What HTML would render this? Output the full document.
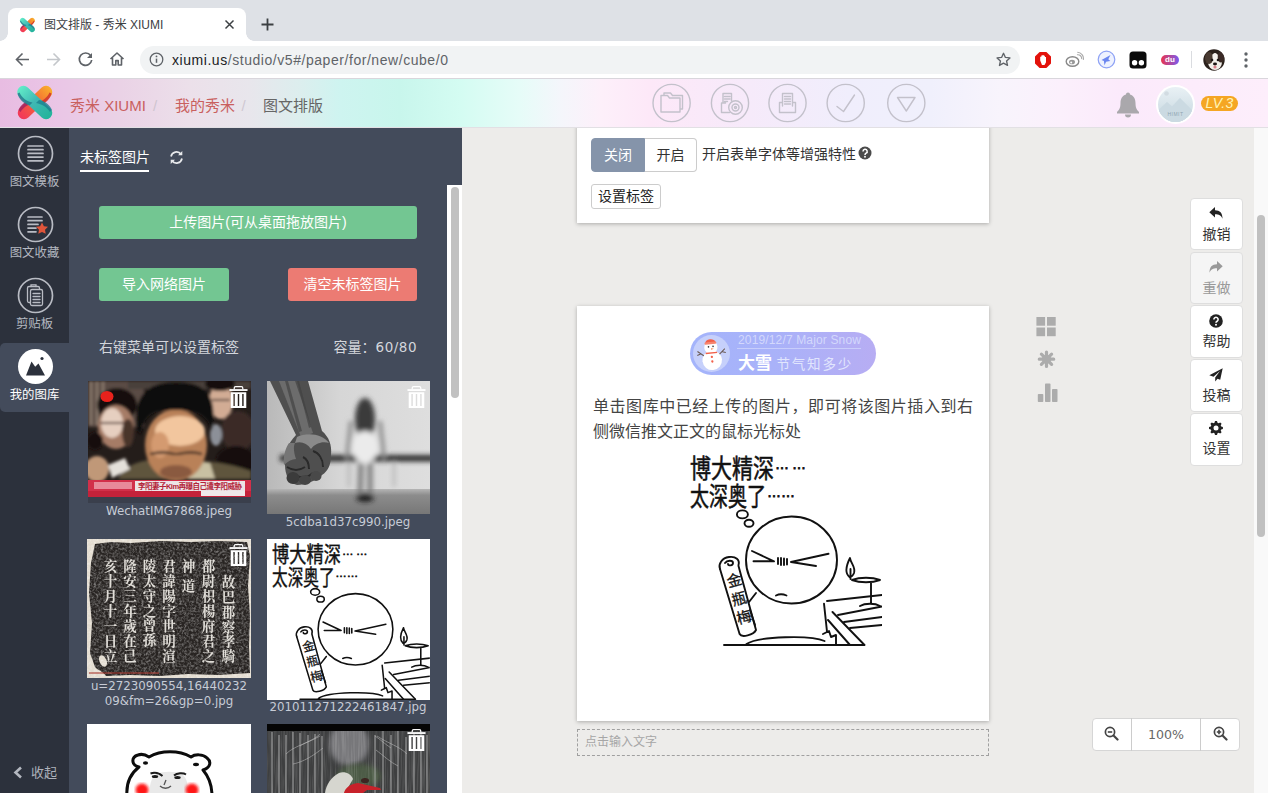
<!DOCTYPE html>
<html lang="zh-CN">
<head>
<meta charset="utf-8">
<title>图文排版 - 秀米 XIUMI</title>
<style>
*{box-sizing:border-box;margin:0;padding:0}
html,body{width:1268px;height:793px;overflow:hidden;background:#edecea}
body{position:relative;font-family:"Liberation Sans","Noto Sans CJK SC",sans-serif;color:#333;font-size:14px}
.abs{position:absolute}
svg{display:block}
/* ---------- browser chrome ---------- */
#tabstrip{left:0;top:0;width:1268px;height:41px;background:#dee1e6}
#tab{left:8px;top:8px;width:238px;height:33px;background:#fff;border-radius:8px 8px 0 0}
#tab .curveL,#tab .curveR{position:absolute;bottom:0;width:8px;height:8px;background:radial-gradient(circle at 0 0,rgba(255,255,255,0) 7.5px,#fff 8px)}
#tab .curveL{left:-8px}
#tab .curveR{right:-8px;background:radial-gradient(circle at 100% 0,rgba(255,255,255,0) 7.5px,#fff 8px)}
#tabtitle{left:44px;top:17px;font-size:12px;line-height:17px;color:#3c4043;white-space:nowrap}
#toolbar{left:0;top:41px;width:1268px;height:38px;background:#fff;border-bottom:1px solid #d9d6dc}
#omni{left:140px;top:46px;width:880px;height:28px;border-radius:14px;background:#f1f3f4}
#url{left:172px;top:51px;font-size:14px;line-height:18px;color:#5f6368;white-space:nowrap;letter-spacing:.55px}
#url b{font-weight:normal;color:#202124}
/* ---------- app header ---------- */
#apphead{left:0;top:79px;width:1268px;height:49px;background:linear-gradient(90deg,#e8bce2 0px,#eac6e6 60px,#ead2e6 120px,#ece0ea 190px,#e8e6ec 250px,#dceeee 300px,#cef4f0 340px,#c8f6ec 400px,#d4fcf2 460px,#e6fcf8 520px,#f4f6fb 560px,#fdf0fa 600px,#fde8f8 650px,#f6eafa 750px,#f0eefc 850px,#f0f0fc 930px,#f8f4fc 1000px,#fbf0fc 1060px,#fbeafb 1120px,#fdeefb 1268px);border-bottom:1px solid #e2e0e4}
.crumb{top:95.700px;font-size:15px;line-height:20px;white-space:nowrap}
/* ---------- left nav ---------- */
#nav{left:0;top:128px;width:69.500px;height:665px;background:#2c313c}
#navact{left:0;top:342.500px;width:69.500px;height:69px;background:#434b5b;border-radius:5px 0 0 5px}
.navlbl{left:0;width:69px;text-align:center;font-size:12.400px;line-height:16px;color:#b4b8c0}
/* ---------- left panel ---------- */
#panel{left:69px;top:128px;width:393px;height:665px;background:#434b5b}
.btn{color:#fff;text-align:center;border-radius:3px;font-size:14px}
.fname{color:#c7ccd6;font-family:"DejaVu Sans","Noto Sans CJK SC",sans-serif;font-size:11.800px;line-height:15px;text-align:center;white-space:nowrap}
/* ---------- main ---------- */
#main{left:462px;top:128px;width:806px;height:665px;background:#edecea}
.card{background:#fff;box-shadow:0 1px 4px rgba(0,0,0,.28)}
.tlbl{left:1190px;width:53px;text-align:center;font-size:14px;line-height:18px;color:#333}
.tbtn{left:1190px;width:53px;height:52.800px;background:#fff;border:1px solid #dedede;border-radius:4px;text-align:center;font-size:14px;color:#333}
</style>
</head>
<body>

<svg width="0" height="0" style="position:absolute">
<defs>
<linearGradient id="lgA" gradientUnits="userSpaceOnUse" x1="4" y1="4" x2="34" y2="32"><stop offset="0" stop-color="#62ecc8"/><stop offset=".5" stop-color="#3fb8b4"/><stop offset="1" stop-color="#25b49c"/></linearGradient>
<linearGradient id="lgB" gradientUnits="userSpaceOnUse" x1="35" y1="4" x2="5" y2="32"><stop offset="0" stop-color="#f9ae2c"/><stop offset=".45" stop-color="#f46a34"/><stop offset="1" stop-color="#f2385a"/></linearGradient>
<symbol id="xlogo" viewBox="0 0 40 37">
<path d="M31 8L9 29" stroke="url(#lgB)" stroke-width="12.500" stroke-linecap="round" fill="none"/>
<path d="M36.500 9.500c-1 5-6 10-12 12l-3-3c6-1 11-5 13-10z" fill="#d2362e" opacity=".9"/>
<path d="M3.500 26c2-5 7-9 13-10l3 3c-6 1-11 4-14 9z" fill="#a8265e" opacity=".9"/>
<path d="M8.500 8L31 29" stroke="url(#lgA)" stroke-width="12.500" stroke-linecap="round" fill="none"/>
<path d="M2.500 9.500c1 5 6 10 12 12l3-3c-6-1-11-5-13-10z" fill="#247c8c" opacity=".85"/>
<path d="M37 26c-2-5-7-9-13-10l-3 3c6 1 11 4 14 9z" fill="#1c7f90" opacity=".8"/>
</symbol>

<symbol id="cartoon" viewBox="0 0 198 196">
<g fill="none" stroke="#111" stroke-width="1.900" stroke-linecap="round" stroke-linejoin="round">
<ellipse cx="58.400" cy="64.400" rx="5.500" ry="4"/><ellipse cx="65" cy="73.200" rx="4.500" ry="3.500"/>
<ellipse cx="107.500" cy="110" rx="45.500" ry="43.500" fill="#fff"/>
<path d="M68 101l22 10.300-20.500 0M144.500 103.800L107 112l25 4M94 108v6M97 108v7M100 108.500v6.500M103 109v5.500"/>
<path d="M92 145.500c3-1.500 7-1.500 10.500 0"/>
<path d="M36 119c-2-5 2-11 9-12s11 3 9.500 8M41 113c2-3 8-3 8 0s-5 3-5 1"/>
<path d="M36 119l19.600 65c2 4 14 1 16.400-4L54.500 116"/>
<path d="M72 143l-7 9M66 160l5 15"/>
<path d="M165.500 127c-5-4-3-12 .5-19 .5 5 6 9 4 15-1 2.500-3 4-4.500 4zM166.500 119v10"/>
<path d="M168 130c8-3 20-3 28 0-8 3-20 3-28 0zM187 133v20M176 156c5-3 15-3 20 0"/>
<path d="M143 151l55-6M154 165l44-8.500M160 172l38-5M166 178l32-3"/>
<path d="M140 153.700l3 28M148.500 162l32 33M144 170l22 25"/>
<path d="M40 195h140M62.500 194c12-8 65-9 78-3"/>
<path d="M139 184l6-3 2 6 5-2v10"/>
</g>
<g font-family="Liberation Sans,Noto Sans CJK SC,sans-serif" fill="#111" stroke="#111" stroke-width=".45">
<text x="6" y="21" font-size="21" textLength="84" lengthAdjust="spacingAndGlyphs" transform="translate(0 2) scale(1 1.220)">博大精深</text>
<text x="91" y="19" font-size="14" textLength="31" stroke-width=".8">……</text>
<text x="6" y="45" font-size="21" textLength="76" lengthAdjust="spacingAndGlyphs" transform="translate(0 1.500) scale(1 1.220)">太深奥了</text>
<text x="83" y="46.500" font-size="14" textLength="28" stroke-width=".8">……</text>
<g transform="rotate(-15 56 150)" font-size="15" stroke-width=".3"><text x="48" y="135">金</text><text x="48" y="154">瓶</text><text x="48" y="173">梅</text></g>
</g>
</symbol>
</defs>
</svg>
<!-- browser chrome -->
<div id="tabstrip" class="abs"></div>
<div id="tab" class="abs"><i class="curveL"></i><i class="curveR"></i></div>
<div id="tabtitle" class="abs">图文排版 - 秀米 XIUMI</div>
<div id="toolbar" class="abs"></div>
<div id="omni" class="abs"></div>
<div id="url" class="abs"><b>xiumi.us</b>/studio/v5#/paper/for/new/cube/0</div>

<!-- tab favicon + close + new tab -->
<svg class="abs" style="left:19px;top:17px" width="17" height="16" viewBox="0 0 40 37"><use href="#xlogo"/></svg>
<svg class="abs" style="left:224px;top:19px" width="11" height="11" viewBox="0 0 11 11"><path d="M1.5 1.5l8 8M9.5 1.5l-8 8" stroke="#3c4043" stroke-width="1.5" fill="none"/></svg>
<svg class="abs" style="left:261px;top:18px" width="13" height="13" viewBox="0 0 13 13"><path d="M6.5 .5v12M.5 6.5h12" stroke="#3c4043" stroke-width="1.8" fill="none"/></svg>
<!-- nav buttons -->
<svg class="abs" style="left:15px;top:52px" width="15" height="15" viewBox="0 0 15 15"><path d="M14 7.5H2M7.5 1.5l-6 6 6 6" stroke="#5f6368" stroke-width="1.6" fill="none"/></svg>
<svg class="abs" style="left:46px;top:52px" width="15" height="15" viewBox="0 0 15 15"><path d="M1 7.5h12M7.5 1.5l6 6-6 6" stroke="#c4c7cb" stroke-width="1.6" fill="none"/></svg>
<svg class="abs" style="left:77px;top:51px" width="17" height="17" viewBox="0 0 17 17"><path d="M13.6 4.6A6.2 6.2 0 1 0 14.7 9" stroke="#5f6368" stroke-width="1.7" fill="none"/><path d="M15 2v5h-5z" fill="#5f6368"/></svg>
<svg class="abs" style="left:109px;top:51px" width="16" height="16" viewBox="0 0 16 16"><path d="M1.5 8L8 2l6.500 6M3.500 6.800V14h3.300V9.600h2.400V14h3.300V6.800" stroke="#5f6368" stroke-width="1.6" fill="none" stroke-linejoin="round"/></svg>
<svg class="abs" style="left:149px;top:52px" width="15" height="15" viewBox="0 0 15 15"><circle cx="7.500" cy="7.500" r="6.300" stroke="#5f6368" stroke-width="1.300" fill="none"/><path d="M7.500 6.600v4.200" stroke="#5f6368" stroke-width="1.500"/><circle cx="7.500" cy="4.400" r=".9" fill="#5f6368"/></svg>
<!-- star -->
<svg class="abs" style="left:995px;top:51px" width="17" height="17" viewBox="0 0 24 24"><path d="M12 3.200l2.700 5.900 6.400.7-4.800 4.300 1.400 6.300L12 17.200l-5.700 3.200 1.400-6.300-4.800-4.300 6.400-.7z" stroke="#5f6368" stroke-width="1.900" fill="none" stroke-linejoin="round"/></svg>
<!-- extensions -->
<svg class="abs" style="left:1034px;top:51px" width="18" height="18" viewBox="0 0 18 18"><path d="M5.600 1h6.800L17 5.600v6.800L12.400 17H5.600L1 12.400V5.600z" fill="#e3120b"/><path d="M6.200 9.500V5.800h1.100V4.600h1.200V4h1.200v.8h1.200V6h1.100v5.200L10.500 14H8z" fill="#fff"/></svg>
<svg class="abs" style="left:1065px;top:51px" width="19" height="17" viewBox="0 0 19 17"><ellipse cx="7.500" cy="10.500" rx="6.300" ry="4.800" fill="#fff" stroke="#8a8a8a" stroke-width="1.400"/><ellipse cx="7" cy="11" rx="3" ry="2.300" fill="#999"/><circle cx="6.200" cy="11.400" r="1" fill="#fff"/><path d="M12 3.800a3.800 3.800 0 0 1 4.600 4.400M12.300 1.300a6.300 6.300 0 0 1 6 7.600" stroke="#aaa" stroke-width="1.100" fill="none"/></svg>
<svg class="abs" style="left:1097px;top:50px" width="19" height="19" viewBox="0 0 19 19"><circle cx="9.500" cy="9.500" r="8.300" fill="#eef2ff" stroke="#8ea2f5" stroke-width="1.200"/><path d="M4.500 10l9-5-2.200 4.300 2 1.800-4.200.7-1.600 3.500-.6-4.300z" fill="#6b86f0"/></svg>
<svg class="abs" style="left:1129px;top:51px" width="18" height="18" viewBox="0 0 18 18"><rect x=".5" y=".5" width="17" height="17" rx="3.500" fill="#0b0b0b"/><circle cx="5.600" cy="11.800" r="2.700" fill="#fff"/><circle cx="12.400" cy="11.800" r="2.700" fill="#fff"/></svg>
<div class="abs" style="left:1161px;top:55px;width:18px;height:10px;border-radius:5px;background:linear-gradient(90deg,#e8344e,#7a5cf0);color:#fff;font-size:8px;line-height:9px;font-weight:bold;text-align:center">du</div>
<div class="abs" style="left:1191px;top:51px;width:1px;height:17px;background:#dadce0"></div>
<svg class="abs" style="left:1203px;top:49px" width="22" height="22" viewBox="0 0 22 22"><defs><clipPath id="dgc"><circle cx="11" cy="11" r="10.700"/></clipPath></defs><g clip-path="url(#dgc)"><rect width="22" height="22" fill="#2b211c"/><g filter="url(#b05)"><ellipse cx="12" cy="13" rx="7" ry="8" fill="#f2efea"/><ellipse cx="6" cy="9" rx="4" ry="6" fill="#4a3a30"/><ellipse cx="18" cy="8" rx="3.500" ry="5.500" fill="#3a2c26"/><ellipse cx="12" cy="8" rx="2.500" ry="4" fill="#f5f2ee"/><circle cx="9" cy="11" r="1.300" fill="#1a1412"/><circle cx="15" cy="11" r="1.300" fill="#1a1412"/><ellipse cx="12" cy="15" rx="2" ry="1.400" fill="#1a1412"/><ellipse cx="12" cy="18" rx="1.600" ry="1.500" fill="#d9808a"/></g></g></svg>
<svg class="abs" style="left:1244px;top:52px" width="4" height="16" viewBox="0 0 4 16"><circle cx="2" cy="2" r="1.700" fill="#5f6368"/><circle cx="2" cy="8" r="1.700" fill="#5f6368"/><circle cx="2" cy="14" r="1.700" fill="#5f6368"/></svg>
<!-- app header -->
<div id="apphead" class="abs"></div>
<div class="abs crumb" style="left:70px;color:#c9605e">秀米 XIUMI</div>
<div class="abs crumb" style="left:175px;color:#c9605e">我的秀米</div>
<div class="abs crumb" style="left:263px;color:#666">图文排版</div>

<svg class="abs" style="left:15px;top:84px" width="40" height="37" viewBox="0 0 40 37"><use href="#xlogo"/></svg>
<div class="abs crumb" style="left:153px;color:#cfc4cf">/</div>
<div class="abs crumb" style="left:241.500px;color:#cfc8d2">/</div>
<!-- header tool icons -->
<svg class="abs" style="left:650px;top:82px" width="280" height="44" viewBox="650 82 280 44" fill="none" stroke="#c3c1cb" stroke-width="1.400" stroke-linecap="round" stroke-linejoin="round">
<circle cx="671.600" cy="103" r="18.600"/><circle cx="730" cy="103" r="18.600"/><circle cx="787.500" cy="103" r="18.600"/><circle cx="845.700" cy="103" r="18.600"/><circle cx="906.300" cy="103" r="18.600"/>
<path d="M661 95.500h6.500l2 2.500H680v14h-19zM664 95v-2h6.500l2 2.500h10v13.500h-2.500"/>
<path d="M723 103v-9.500h8.500V101M721.500 103h4M721.500 103v9.500h8M724.500 96.500h5.500M724.500 99h5.500M724.500 101.500h3"/><circle cx="735.500" cy="107.500" r="6.800"/><circle cx="735.500" cy="107.500" r="3.500"/><circle cx="735.500" cy="107.500" r="1"/>
<path d="M782.500 106v-12.500h10V106M784.500 96.500h6M784.500 99h6M784.500 101.500h6M784.500 104h6M779.500 102.500h3M792.500 102.500h3M779.500 102.500v10h16v-10"/>
<path d="M837 106.500l6.500 5 11-16.500"/>
<path d="M897.500 97.500h17.500l-8.700 13.500z"/>
</svg>
<!-- bell / avatar / level -->
<svg class="abs" style="left:1115px;top:91px" width="26" height="27" viewBox="0 0 26 27"><path d="M13 1.500c1.200 0 2 .8 2 1.900 4 1.200 5.500 4.600 5.500 8.600 0 4.500 1 6.500 3.500 9v1.500H2V21c2.500-2.500 3.500-4.500 3.500-9 0-4 1.500-7.400 5.500-8.600 0-1.100.8-1.900 2-1.900z" fill="#aaa8ac"/><path d="M10 23.500h6a3 3 0 0 1-6 0z" fill="#aaa8ac"/></svg>
<div class="abs" style="left:1156px;top:85px;width:39px;height:39px;border-radius:50%;background:#fff"></div>
<svg class="abs" style="left:1158px;top:87px" width="35" height="35" viewBox="0 0 35 35"><defs><clipPath id="avc"><circle cx="17.500" cy="17.500" r="17.500"/></clipPath><linearGradient id="avg" x1="0" y1="0" x2="0" y2="1"><stop offset="0" stop-color="#e9f1f5"/><stop offset="1" stop-color="#c6d7df"/></linearGradient></defs><g clip-path="url(#avc)"><rect width="35" height="35" fill="url(#avg)"/><circle cx="8.500" cy="6.500" r="2.300" fill="#d2dce2"/><path d="M0 24l9-9 5 4.500 8-8.500 13 13v11H0z" fill="#cfdde5"/><path d="M0 35V23l9-8 5 4.500 8-8.500 13 13v11z" fill="#c9d9e1" opacity=".7"/><text x="17.500" y="29" font-size="5" text-anchor="middle" fill="#8fa5b1" font-family="Liberation Sans,sans-serif" letter-spacing=".5">HIMIT</text></g></svg>
<div class="abs" style="left:1201px;top:96px;width:37px;height:15px;border-radius:8px;background:#f5a623;color:#fff4b8;font-size:14px;line-height:15px;font-style:italic;text-align:center;letter-spacing:.3px">LV.3</div>
<!-- left nav -->
<div id="nav" class="abs"></div>
<div id="navact" class="abs"></div>
<div class="abs navlbl" style="top:174px">图文模板</div>
<div class="abs navlbl" style="top:245px">图文收藏</div>
<div class="abs navlbl" style="top:316px">剪贴板</div>
<div class="abs navlbl" style="top:387px;color:#fff">我的图库</div>
<div class="abs" style="left:31px;top:763.500px;font-size:13px;line-height:18px;color:#aeb2bb">收起</div>

<svg class="abs" style="left:1.200px;top:128px" width="69" height="290" viewBox="0 128 69 290" fill="none" stroke="#b9bcc4" stroke-width="1.700" stroke-linecap="round">
<circle cx="34.500" cy="153.500" r="17"/>
<path d="M27 146h15M27 149.700h15M27 153.400h15M27 157.100h15M27 160.800h15" stroke-width="1.700"/>
<circle cx="34.500" cy="224.500" r="17"/>
<path d="M27 217h14M27 220.700h14M27 224.400h10M27 228.100h8M27 231.800h8" stroke-width="1.700"/>
<path d="M41 222.500l1.900 3.700 4.100.6-3 2.900.7 4.100-3.700-1.900-3.700 1.900.7-4.100-3-2.900 4.100-.6z" fill="#e0553a" stroke="none"/>
<circle cx="34.500" cy="295.500" r="17"/>
<g stroke-width="1.300"><rect x="26.500" y="286.500" width="12" height="16" rx="1.500"/><path d="M30 286.500v-1.700h5v1.700"/><rect x="29.500" y="289.500" width="12" height="16" rx="1.500" fill="#2c313c"/><path d="M32 293.500h7M32 296.500h7M32 299.500h7M32 302.500h7"/></g>
<circle cx="34.500" cy="366.500" r="17.500" fill="#fff" stroke="none"/>
<path d="M25 375.500l5.500-14 3.700 5.300 3.300-3.300 6.500 12z" fill="#2c313c" stroke="none"/><circle cx="41" cy="358.500" r="1.600" fill="#2c313c" stroke="none"/>
</svg>
<svg class="abs" style="left:13px;top:766px" width="10" height="13" viewBox="0 0 10 13"><path d="M8 1.500l-5.500 5 5.500 5" stroke="#b4b8c0" stroke-width="2.600" fill="none"/></svg>
<!-- left panel -->
<div id="panel" class="abs"></div>

<div class="abs" style="left:80px;top:148px;font-size:14px;line-height:18px;color:#fff;white-space:nowrap">未标签图片</div>
<div class="abs" style="left:80px;top:169.500px;width:69px;height:2px;background:#fff"></div>
<svg class="abs" style="left:169px;top:150px" width="15" height="15" viewBox="0 0 15 15" fill="none" stroke="#e8e9ec" stroke-width="1.700"><path d="M2 6.500A5.600 5.600 0 0 1 12 4.200M13 8.500A5.600 5.600 0 0 1 3 10.800"/><path d="M13.300 1v4.300H9zM1.700 14V9.700H6z" fill="#e8e9ec" stroke="none"/></svg>
<div class="abs btn" style="left:99px;top:205.500px;width:318px;height:33px;line-height:32px;background:#73c692">上传图片(可从桌面拖放图片)</div>
<div class="abs btn" style="left:99px;top:268px;width:130px;height:33px;line-height:32px;background:#73c692">导入网络图片</div>
<div class="abs btn" style="left:288px;top:268px;width:129px;height:33px;line-height:32px;background:#ec7b73">清空未标签图片</div>
<div class="abs" style="left:99px;top:338px;font-size:14px;line-height:18px;color:#d3d6dc;white-space:nowrap">右键菜单可以设置标签</div>
<div class="abs" style="left:300px;top:338px;width:117px;text-align:right;font-size:14px;line-height:18px;color:#d3d6dc;white-space:nowrap">容量：<span style="font-family:'DejaVu Sans',sans-serif;font-size:13.500px;letter-spacing:.5px">60/80</span></div>
<!-- panel scrollbar -->
<div class="abs" style="left:447px;top:185px;width:15px;height:608px;background:#fff"></div>
<div class="abs" style="left:451px;top:187px;width:8px;height:211px;border-radius:4px;background:#c1c1c1"></div>
<!-- thumbnails -->

<svg width="0" height="0" style="position:absolute"><defs>
<filter id="b1" x="-10%" y="-10%" width="120%" height="120%"><feGaussianBlur stdDeviation="1.600"/></filter>
<filter id="b2" x="-10%" y="-10%" width="120%" height="120%"><feGaussianBlur stdDeviation="2.800"/></filter>
<filter id="b05" x="-10%" y="-10%" width="120%" height="120%"><feGaussianBlur stdDeviation=".7"/></filter>
<filter id="noise" x="0" y="0" width="100%" height="100%"><feTurbulence type="fractalNoise" baseFrequency=".42" numOctaves="3" seed="4" result="n"/><feColorMatrix in="n" type="matrix" values="0 0 0 0 1  0 0 0 0 1  0 0 0 0 1  1.600 1.600 0 0 -1.350"/></filter>
<filter id="noise2" x="0" y="0" width="100%" height="100%"><feTurbulence type="fractalNoise" baseFrequency=".7 .03" numOctaves="2" seed="9" result="n"/><feColorMatrix in="n" type="matrix" values="0 0 0 0 1  0 0 0 0 1  0 0 0 0 1  2.200 1 0 0 -1.350"/></filter>
</defs></svg>
<!-- thumb 1: news photo -->
<svg class="abs" style="left:88px;top:381px" width="163" height="122" viewBox="0 0 163 122">
<rect width="163" height="122" fill="#241d1a"/>
<g filter="url(#b1)">
<rect x="0" y="0" width="56" height="46" fill="#5a4c44"/>
<path d="M3 0v44M9 0v44M15 0v30" stroke="#8a7a6e" stroke-width="2.500"/>
<rect x="40" y="0" width="123" height="8" fill="#4a403a"/>
<ellipse cx="29" cy="24" rx="20" ry="17" fill="#17110f"/>
<ellipse cx="28" cy="46" rx="18" ry="22" fill="#a67c66"/>
<ellipse cx="24" cy="42" rx="11" ry="15" fill="#e6cfc0"/>
<path d="M12 42h26" stroke="#5a3e34" stroke-width="2"/>
<ellipse cx="40" cy="52" rx="6" ry="14" fill="#4a342c"/>
<ellipse cx="133" cy="20" rx="12" ry="18" fill="#d2ac94"/>
<ellipse cx="132" cy="3" rx="15" ry="7" fill="#15100e"/>
<path d="M124 19h18" stroke="#4a3a34" stroke-width="1.800"/>
<ellipse cx="150" cy="50" rx="17" ry="20" fill="#3a2b27"/>
<ellipse cx="128" cy="54" rx="6" ry="11" fill="#8c9098"/>
<ellipse cx="148" cy="80" rx="20" ry="15" fill="#120e0d"/>
<path d="M30 98c8-16 24-20 52-20s60 4 81 12v8z" fill="#5f553e"/>
<path d="M104 80l18 2 5 16h-27z" fill="#c8c0a2"/>
<ellipse cx="88" cy="64" rx="31" ry="36" fill="#b98158"/>
<ellipse cx="92" cy="50" rx="25" ry="15" fill="#f2c69e"/>
<ellipse cx="72" cy="64" rx="9" ry="13" fill="#d49a70"/>
<path d="M49 50C44 16 58 1 88 1s42 14 36 48c-5-14-14-20-36-20S56 32 53 54z" fill="#110d0c"/>
<path d="M62 73c8-2 18-2 24 0l4 0c8-2 18-2 24 0" stroke="#2e221e" stroke-width="2.200" fill="none"/>
<ellipse cx="88" cy="91" rx="16" ry="7" fill="#8a5a40"/>
<ellipse cx="9" cy="88" rx="12" ry="13" fill="#c09878"/>
<path d="M20 84l17-7 5 11-18 9z" fill="#e4e0da"/>
<ellipse cx="7" cy="60" rx="8" ry="9" fill="#15100e"/>
</g>
<rect x="0" y="99" width="163" height="17" fill="#d2304a"/>
<rect x="47" y="100" width="110" height="10" fill="#ece4e6"/>
<rect x="0" y="110" width="163" height="6" fill="#c4223a"/>
<rect x="113" y="110" width="44" height="5" fill="#efe9ea"/>
<rect x="6" y="101" width="38" height="7" fill="#e88a9a"/>
<text x="50" y="108.300" font-size="7.500" font-weight="bold" fill="#b32438" font-family="Liberation Sans,Noto Sans CJK SC,sans-serif" textLength="104">李阳妻子Kim再曝自己遭李阳威胁</text>
<rect x="0" y="116" width="163" height="6" fill="#3a3f4c"/>
<ellipse cx="19" cy="15.500" rx="6.500" ry="5.500" fill="#e8231c" filter="url(#b05)"/>
</svg>
<!-- thumb 2: b/w fist -->
<svg class="abs" style="left:266.500px;top:381px" width="163" height="133" viewBox="0 0 163 133">
<defs><linearGradient id="t2bg" x1="0" y1="0" x2="1" y2="0"><stop offset="0" stop-color="#b9b9b9"/><stop offset=".45" stop-color="#d6d6d6"/><stop offset="1" stop-color="#dedede"/></linearGradient>
<linearGradient id="t2fl" x1="0" y1="0" x2="0" y2="1"><stop offset="0" stop-color="#b5b5b5"/><stop offset=".25" stop-color="#8c8c8c"/><stop offset="1" stop-color="#777"/></linearGradient></defs>
<rect width="163" height="133" fill="url(#t2bg)"/>
<rect x="0" y="108" width="163" height="25" fill="url(#t2fl)"/>
<g filter="url(#b2)">
<rect x="13" y="74" width="155" height="6.500" fill="#2c2c2c"/>
<ellipse cx="98" cy="38" rx="10" ry="21" fill="#3a3a3a"/>
<ellipse cx="98" cy="66" rx="13" ry="16" fill="#ebebeb"/>
<path d="M84 40l-4 38M113 40l4 38" stroke="#8a8a8a" stroke-width="4"/>
<path d="M94 82l-1 32M103 82l0 32" stroke="#7c7c7c" stroke-width="5"/>
<ellipse cx="98" cy="117" rx="9" ry="4" fill="#1e1e1e"/>
<path d="M82 80v26M127 80v26" stroke="#aaa" stroke-width="2"/>
</g>
<g filter="url(#b05)">
<path d="M3 0h38l14 50c7 6 10 14 9 24 0 10-3 16-9 20-6 6-17 10-25 10-8-2-12-10-12-20-2-10 3-22 11-30z" fill="#505050"/>
<path d="M12 0h16l18 52-12 4z" fill="#6c6c6c"/>
<path d="M18 0h3l14 50-3 1zM30 0h2l12 46-2 1z" fill="#3e3e3e" opacity=".6"/>
<path d="M30 56c10-5 26-3 32 6-6-2-14 0-18 6-4-6-10-8-16-6z" fill="#8a8a8a"/>
<path d="M22 62c-4 6-6 14-5 22 4-4 8-6 12-6-2-6-3-12-1-16z" fill="#767676"/>
<path d="M20 86c6 4 12 4 18 0M28 94c6 4 14 2 18-2M46 70c6 2 10 8 10 16M36 76c4 2 6 6 6 12" stroke="#2a2a2a" stroke-width="2" fill="none"/>
<ellipse cx="26" cy="97" rx="6.500" ry="6" fill="#3a3a3a"/><ellipse cx="38" cy="99" rx="6" ry="5" fill="#444"/><ellipse cx="49" cy="95" rx="5.500" ry="5" fill="#4a4a4a"/>
</g>
</svg>
<!-- thumb 3: stele rubbing -->
<svg class="abs" style="left:87px;top:539px" width="164" height="139" viewBox="0 0 164 139">
<rect width="164" height="139" fill="#e3dcd0"/>
<path d="M8 5l16-2 20 1 30-2 30 1 28-1 28 1 3 14-2 30 2 30-1 30 1 27-32 2-30-1-28 2-30-1-24 1c-3-5-9-6-11-9l-5-14 2-30-3-30 2-30z" fill="#282422"/><ellipse cx="16" cy="122" rx="3.500" ry="6" transform="rotate(-25 16 122)" fill="#e3dcd0"/>
<rect width="164" height="139" fill="#fff" filter="url(#noise)" opacity=".38"/>
<g font-family="Noto Serif CJK SC,Noto Sans CJK SC,serif" font-size="13.500" font-weight="bold" fill="#efece6" opacity=".92" style="writing-mode:vertical-rl">
<text x="141.500" y="36" textLength="88">故巴郡察孝騎</text>
<text x="121.500" y="20" textLength="104">都尉枳楊府君之</text>
<text x="101.500" y="20" textLength="34">神道</text>
<text x="82" y="20" textLength="104">君諱陽字世明渲</text>
<text x="62.500" y="20" textLength="88">陵太守之曾孫</text>
<text x="43" y="20" textLength="104">隆安三年歲在己</text>
<text x="23.500" y="20" textLength="104">亥十月十一日立</text>
</g>
<path d="M2 134h70" stroke="#a8362c" stroke-width="1.500" opacity=".7"/>
</svg>
<!-- thumb 4: cartoon -->
<div class="abs" style="left:266.500px;top:539px;width:163px;height:161px;background:#fff"></div>
<svg class="abs" style="left:266.500px;top:539px" width="163" height="161" viewBox="0 0 198 196"><use href="#cartoon"/></svg>
<!-- thumb 5: bear meme -->
<div class="abs" style="left:87px;top:724.200px;width:164px;height:69px;background:#fff"></div>
<svg class="abs" style="left:87px;top:724.200px" width="164" height="69" viewBox="0 0 164 69">
<path d="M40 72c-1-12 3-22 12-29-8-2-8-10-1-12 4-1.500 8 0 11 2 12-7 30-7 42 0 4-3 12-3 16 1 5 4 3 10-4 12 6 7 9 16 9 26" fill="#fff" stroke="#0c0c0c" stroke-width="3" stroke-linejoin="round"/>
<ellipse cx="58.500" cy="39" rx="2.600" ry="1.700" fill="#0c0c0c"/><ellipse cx="109" cy="40.500" rx="3" ry="1.700" fill="#0c0c0c"/>
<g filter="url(#b05)"><path d="M63 70c-1-8 1-16 6-20 8-3 18-3 26 0 5 4 7 12 5 20z" fill="#e9e9e9"/>
<path d="M63.500 49.500c4-1.500 9-.5 12 2.500M87 51.500c3-2.500 9-3 12-1" stroke="#1c1c1c" stroke-width="2" fill="none"/>
<ellipse cx="68" cy="52.500" rx="3.200" ry="1.500" fill="#1a1a1a"/><ellipse cx="90.500" cy="53.500" rx="3.200" ry="1.500" fill="#1a1a1a"/>
<path d="M73 62c3 3 8 3 11 0M79 56l-2 5" stroke="#555" stroke-width="1.300" fill="none"/></g>
<ellipse cx="55" cy="66" rx="6.500" ry="6.500" fill="#ff1212" filter="url(#b1)"/><ellipse cx="105" cy="66" rx="6.500" ry="6.500" fill="#ff1212" filter="url(#b1)"/>
</svg>
<!-- thumb 6: forest -->
<svg class="abs" style="left:266.500px;top:724.200px" width="163" height="69" viewBox="0 0 163 69">
<rect width="163" height="69" fill="#3e3f40"/>
<ellipse cx="82" cy="20" rx="20" ry="22" fill="#77777a" filter="url(#b2)"/>
<ellipse cx="92" cy="52" rx="22" ry="12" fill="#4c5a44" filter="url(#b2)"/>
<rect y="7" width="163" height="62" fill="#fff" filter="url(#noise2)" opacity=".13"/>
<g stroke="#c2c2c2" stroke-width="1" opacity=".8"><path d="M5 8v62 M12 11v62 M19 11v62 M26 8v62 M33 9v62 M41 11v62 M48 10v62 M55 12v62 M108 11v62 M116 7v62 M124 11v62 M131 7v62 M139 13v62 M147 10v62 M154 9v62 M160 11v62"/></g>
<g stroke="#c8c8c8" stroke-width=".8" fill="none" opacity=".6"><path d="M19 30c8-8 20-10 34-18M26 40c10-2 20-8 30-16M33 22c6-4 14-6 20-12M140 30c-8-8-18-10-30-18M131 42c-8-4-14-10-22-16M124 24c-6-4-10-8-16-12"/></g>
<rect width="163" height="7" fill="#050505"/>
<g filter="url(#b05)"><path d="M58 69c1-8 6-16 14-20 6-2 12 1 14 6l-8 14z" fill="#d6d6cf"/><path d="M77 69c1-5 6-9 14-10l22 5 1 2-14 0-4 3z" fill="#c8232a"/><ellipse cx="98" cy="56.500" rx="4" ry="2.600" fill="#3c2620"/></g>
</svg>
<svg class="abs" style="left:228.5px;top:385.5px" width="19" height="23" viewBox="0 0 20 24"><path d="M5.500 3.200V2c0-.8.600-1.400 1.400-1.400h6.200c.8 0 1.400.6 1.400 1.400v1.200" fill="none" stroke="#fff" stroke-width="1.300"/><rect x=".5" y="3.200" width="19" height="1.900" fill="#fff"/><path d="M1.800 6.500h16.400V23H1.800zM4.600 8.300v12.600h1.500V8.300zM9.250 8.300v12.600h1.500V8.300zM13.900 8.300v12.600h1.500V8.300z" fill="#fff" fill-rule="evenodd"/></svg><svg class="abs" style="left:407.0px;top:385.5px" width="19" height="23" viewBox="0 0 20 24"><path d="M5.500 3.200V2c0-.8.600-1.400 1.400-1.400h6.200c.8 0 1.400.6 1.400 1.400v1.200" fill="none" stroke="#fff" stroke-width="1.300"/><rect x=".5" y="3.200" width="19" height="1.900" fill="#fff"/><path d="M1.800 6.500h16.400V23H1.800zM4.600 8.300v12.600h1.500V8.300zM9.250 8.300v12.600h1.500V8.300zM13.900 8.300v12.600h1.500V8.300z" fill="#fff" fill-rule="evenodd"/></svg><svg class="abs" style="left:228.5px;top:543.5px" width="19" height="23" viewBox="0 0 20 24"><path d="M5.500 3.200V2c0-.8.600-1.400 1.400-1.400h6.200c.8 0 1.400.6 1.400 1.400v1.200" fill="none" stroke="#fff" stroke-width="1.300"/><rect x=".5" y="3.200" width="19" height="1.900" fill="#fff"/><path d="M1.800 6.500h16.400V23H1.800zM4.600 8.300v12.600h1.500V8.300zM9.250 8.300v12.600h1.500V8.300zM13.900 8.300v12.600h1.500V8.300z" fill="#fff" fill-rule="evenodd"/></svg><svg class="abs" style="left:407.0px;top:729.0px" width="19" height="23" viewBox="0 0 20 24"><path d="M5.500 3.200V2c0-.8.600-1.400 1.400-1.400h6.200c.8 0 1.400.6 1.400 1.400v1.200" fill="none" stroke="#fff" stroke-width="1.300"/><rect x=".5" y="3.200" width="19" height="1.900" fill="#fff"/><path d="M1.800 6.500h16.400V23H1.800zM4.600 8.300v12.600h1.500V8.300zM9.250 8.300v12.600h1.500V8.300zM13.900 8.300v12.600h1.500V8.300z" fill="#fff" fill-rule="evenodd"/></svg>
<div class="abs fname" style="left:87px;top:503.500px;width:164px">WechatIMG7868.jpeg</div>
<div class="abs fname" style="left:266px;top:514.500px;width:164px">5cdba1d37c990.jpeg</div>
<div class="abs fname" style="left:87px;top:678.500px;width:164px">u=2723090554,16440232<br>09&amp;fm=26&amp;gp=0.jpg</div>
<div class="abs fname" style="left:266px;top:699.500px;width:164px">201011271222461847.jpg</div>

<!-- main -->
<div id="main" class="abs"></div>

<!-- card 1 -->
<div class="abs" style="left:562px;top:128px;width:440px;height:110px;overflow:hidden"><div class="abs card" style="left:15px;top:-28px;width:412px;height:123px"></div></div>
<div class="abs" style="left:591px;top:138px;width:54px;height:34px;background:#8594aa;border:1px solid #8594aa;border-radius:4px 0 0 4px;color:#fff;font-size:14px;line-height:32px;text-align:center">关闭</div>
<div class="abs" style="left:645px;top:138px;width:52px;height:34px;background:#fff;border:1px solid #ccc;border-left:0;border-radius:0 4px 4px 0;color:#333;font-size:14px;line-height:32px;text-align:center">开启</div>
<div class="abs" style="left:702px;top:145px;font-size:14px;line-height:18px;color:#333;white-space:nowrap">开启表单字体等增强特性</div>
<svg class="abs" style="left:858px;top:146px" width="14" height="14" viewBox="0 0 14 14"><circle cx="7" cy="7" r="6.500" fill="#4a4a4a"/><path d="M5 5.400a2.100 2.100 0 1 1 3.100 1.800c-.8.500-1.100.8-1.100 1.700" stroke="#fff" stroke-width="1.500" fill="none"/><circle cx="7" cy="10.700" r=".95" fill="#fff"/></svg>
<div class="abs" style="left:591px;top:184px;width:70px;height:25px;background:#fff;border:1px solid #ccc;border-radius:3px;color:#222;font-size:14px;line-height:23px;text-align:center">设置标签</div>
<!-- card 2 -->
<div class="abs card" style="left:577px;top:306px;width:412px;height:415px"></div>
<div class="abs" style="left:690px;top:332px;width:186px;height:43px;border-radius:22px;background:linear-gradient(90deg,#a4b4fb 0,#a9b2f9 45%,#b7adf3 100%)"></div>
<div class="abs" style="left:693px;top:335px;width:37px;height:37px;border-radius:50%;background:#c6d0fb"></div>
<svg class="abs" style="left:692.500px;top:334px;transform:rotate(-6deg)" width="37" height="39" viewBox="0 0 32 34"><path d="M4 14l6 5M3.500 17.500l3-1M28 14l-6 5M28.500 17.500l-3-1" stroke="#6b5a55" stroke-width=".9" fill="none"/><circle cx="16" cy="23" r="8.500" fill="#fff"/><circle cx="16" cy="11.500" r="5.800" fill="#fff"/><path d="M11.500 7.500c.5-4 8.500-4 9 0z" fill="#f2604a"/><rect x="10.800" y="7" width="10.400" height="1.800" rx=".9" fill="#f7856f"/><circle cx="14" cy="11" r=".7" fill="#333"/><circle cx="18" cy="11" r=".7" fill="#333"/><path d="M16 12.300l2.500.9-2.500.6z" fill="#f2844a"/><circle cx="16" cy="20" r="1" fill="#f2604a"/><circle cx="16" cy="24" r="1" fill="#f2604a"/><path d="M11 16.500h10" stroke="#f2604a" stroke-width="1.200"/></svg>
<div class="abs" style="left:738px;top:331.700px;font-size:12px;line-height:16px;color:#d3d8fc;white-space:nowrap;letter-spacing:.15px">2019/12/7 Major Snow</div>
<div class="abs" style="left:737px;top:348px;width:124px;height:1px;background:#cfd5fb;opacity:.8"></div>
<div class="abs" style="left:738px;top:353.300px;font-size:17px;line-height:22px;color:#fff;font-weight:bold;white-space:nowrap">大雪</div>
<div class="abs" style="left:776.500px;top:355px;font-size:13.500px;line-height:20px;color:#e1e5fd;white-space:nowrap;letter-spacing:1.800px">节气知多少</div>
<div class="abs" style="left:593px;top:394px;width:380px;font-size:16px;line-height:25px;color:#444;text-align:justify">单击图库中已经上传的图片，即可将该图片插入到右侧微信推文正文的鼠标光标处</div>
<svg class="abs" style="left:683.500px;top:450px" width="198" height="196" viewBox="0 0 198 196"><use href="#cartoon"/></svg>
<!-- text input -->
<div class="abs" style="left:577px;top:729px;width:412px;height:27px;border:1px dashed #a0a0a0;color:#a6a6a6;font-size:12px;line-height:25px;padding-left:7px">点击输入文字</div>
<!-- side icons -->
<svg class="abs" style="left:1030px;top:310px" width="34" height="98" viewBox="1030 310 34 98" fill="#acacac"><rect x="1036.400" y="317" width="8.700" height="8.700"/><rect x="1047" y="317" width="8.700" height="8.700"/><rect x="1036.400" y="327.500" width="8.700" height="8.700"/><rect x="1047" y="327.500" width="8.700" height="8.700"/>
<g stroke="#acacac" stroke-width="3.200" stroke-linecap="round"><path d="M1046.500 352v14.400M1039.300 359.200h14.400M1041.400 354.100l10.200 10.200M1041.400 364.300l10.200-10.200"/></g><circle cx="1046.500" cy="359.200" r="4.500"/>
<rect x="1037.800" y="394" width="5.500" height="8" rx=".8"/><rect x="1045" y="383.600" width="5.500" height="18.400" rx=".8"/><rect x="1052" y="389" width="5.500" height="13" rx=".8"/></svg>
<!-- right toolbar -->
<div class="abs tbtn" style="top:197.700px"></div>
<div class="abs tbtn" style="top:251.500px;background:#f5f5f5"></div>
<div class="abs tbtn" style="top:305.300px"></div>
<div class="abs tbtn" style="top:359.100px"></div>
<div class="abs tbtn" style="top:412.900px"></div>
<div class="abs tlbl" style="top:225px">撤销</div>
<div class="abs tlbl" style="top:279px;color:#999">重做</div>
<div class="abs tlbl" style="top:332px">帮助</div>
<div class="abs tlbl" style="top:386px">投稿</div>
<div class="abs tlbl" style="top:439px">设置</div>
<svg class="abs" style="left:1209px;top:207px" width="14" height="13" viewBox="0 0 14 13"><path d="M6 0v3.200c5 0 7.500 2.800 7.500 8.500C12 8.500 10 7.300 6 7.300v3.200L.3 5.200z" fill="#222"/></svg>
<svg class="abs" style="left:1209px;top:261px" width="14" height="13" viewBox="0 0 14 13"><path d="M8 0v3.200C3 3.200.5 6 .5 11.700 2 8.500 4 7.300 8 7.300v3.200l5.700-5.300z" fill="#999"/></svg>
<svg class="abs" style="left:1209px;top:314px" width="14" height="14" viewBox="0 0 14 14"><circle cx="7" cy="7" r="6.800" fill="#222"/><path d="M4.900 5.400a2.100 2.100 0 1 1 3.200 1.800c-.8.500-1.100.8-1.100 1.600" stroke="#fff" stroke-width="1.600" fill="none"/><circle cx="7" cy="10.800" r="1" fill="#fff"/></svg>
<svg class="abs" style="left:1209px;top:368px" width="14" height="14" viewBox="0 0 14 14"><path d="M13.700.3L.3 7.300l4.200 1.500L11 3 6.200 9.500v4l2.300-2.800 2.700 1z" fill="#222"/></svg>
<svg class="abs" style="left:1209px;top:421px" width="14" height="14" viewBox="0 0 14 14"><path d="M7 0l1 .1.500 1.700 1.100.5L11.200 1.400l1.400 1.400-.9 1.600.5 1.100 1.700.5v2l-1.700.5-.5 1.100.9 1.600-1.400 1.400-1.600-.9-1.100.5L8 14H6l-.5-1.800-1.100-.5-1.600.9-1.400-1.400.9-1.600-.5-1.100L0 8V6l1.800-.5.500-1.100-.9-1.600 1.400-1.400 1.600.9 1.100-.5L6 0z" fill="#222"/><circle cx="7" cy="7" r="2.500" fill="#fff"/></svg>
<!-- zoom controls -->
<div class="abs" style="left:1092px;top:718px;width:148px;height:33px;background:#fff;border:1px solid #d6d6d6;border-radius:4px"></div>
<div class="abs" style="left:1131px;top:718px;width:1px;height:33px;background:#ccc"></div>
<div class="abs" style="left:1200px;top:718px;width:1px;height:33px;background:#ccc"></div>
<div class="abs" style="left:1132px;top:725.500px;width:68px;text-align:center;font-family:'DejaVu Sans',sans-serif;font-size:12.600px;line-height:18px;color:#666">100%</div>
<svg class="abs" style="left:1104px;top:726px" width="15" height="15" viewBox="0 0 15 15" fill="none" stroke="#444" stroke-width="1.700"><circle cx="6" cy="6" r="4.600"/><path d="M9.500 9.500l4 4" stroke-width="2.200" stroke-linecap="round"/><path d="M3.800 6h4.400" stroke-width="1.600"/></svg>
<svg class="abs" style="left:1213px;top:726px" width="15" height="15" viewBox="0 0 15 15" fill="none" stroke="#444" stroke-width="1.700"><circle cx="6" cy="6" r="4.600"/><path d="M9.500 9.500l4 4" stroke-width="2.200" stroke-linecap="round"/><path d="M3.800 6h4.400M6 3.800v4.400" stroke-width="1.600"/></svg>
<!-- page scrollbar -->
<div class="abs" style="left:1254px;top:128px;width:14px;height:665px;background:#f9f9f9"></div>
<div class="abs" style="left:1257px;top:215px;width:8px;height:322px;border-radius:4px;background:#c0c0c0"></div>
</body>
</html>
